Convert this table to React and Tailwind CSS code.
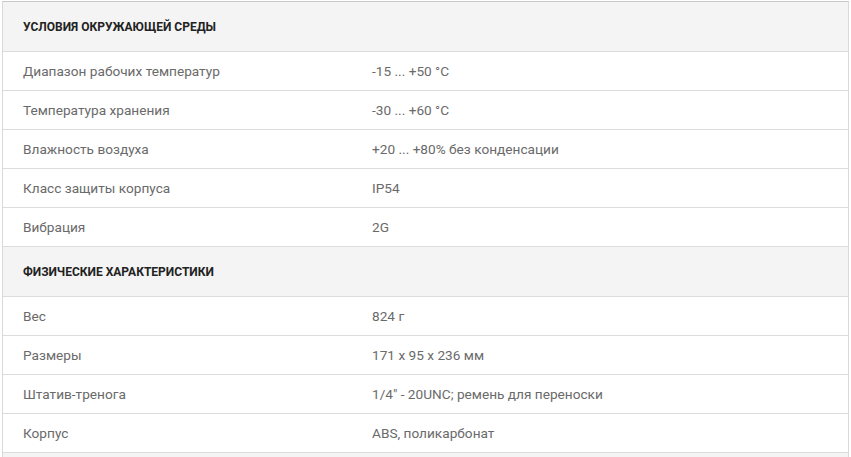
import React from "react";

const sections = [
  {
    title: "Условия окружающей среды",
    rows: [
      ["Диапазон рабочих температур", "-15 ... +50 °C"],
      ["Температура хранения", "-30 ... +60 °C"],
      ["Влажность воздуха", "+20 ... +80% без конденсации"],
      ["Класс защиты корпуса", "IP54"],
      ["Вибрация", "2G"],
    ],
  },
  {
    title: "Физические характеристики",
    rows: [
      ["Вес", "824 г"],
      ["Размеры", "171 x 95 x 236 мм"],
      ["Штатив-тренога", "1/4\" - 20UNC; ремень для переноски"],
      ["Корпус", "ABS, поликарбонат"],
    ],
  },
  { title: "", rows: [] },
];

export default function App() {
  return (
    <div className="w-[851px] h-[457px] overflow-hidden bg-white pt-px" style={{ fontFamily: "Roboto, 'Liberation Sans', sans-serif" }}>
      <div className="ml-[2px] w-[847px] border-x border-t border-[#d9d9d9] border-t-[#c8c9ca]">
        {sections.map((s, i) => (
          <div key={i}>
            <div className="h-[50px] bg-[#f4f4f4] border-b border-[#dcdcdc] flex items-center pl-[20px] text-[12px] font-bold uppercase text-[#222]">
              {s.title}
            </div>
            {s.rows.map(([k, v]) => (
              <div key={k} className="h-[39px] border-b border-[#dcdcdc] flex items-center text-[13.65px] text-[#6a6a6a]">
                <div className="w-[349px] pl-[20px]">{k}</div>
                <div className="pl-[20px]">{v}</div>
              </div>
            ))}
          </div>
        ))}
      </div>
    </div>
  );
}
